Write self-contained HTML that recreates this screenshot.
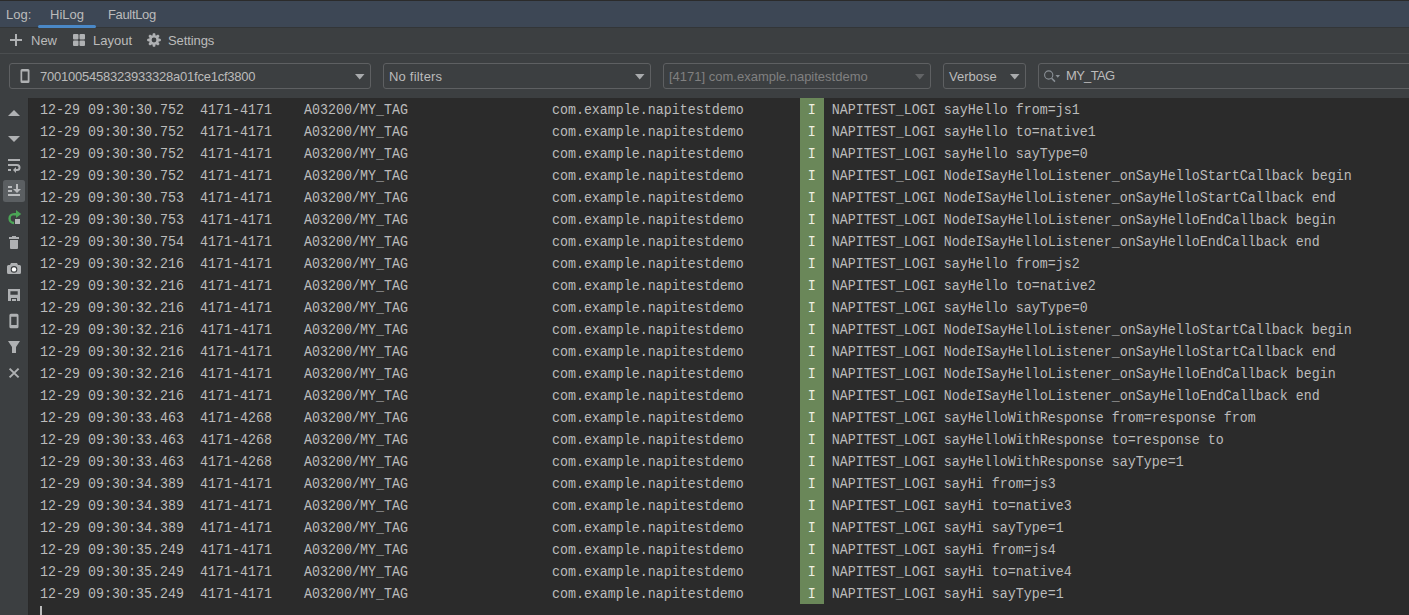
<!DOCTYPE html>
<html><head><meta charset="utf-8">
<style>
*{box-sizing:border-box;margin:0;padding:0}
html,body{width:1409px;height:615px;overflow:hidden;background:#3c3f41}
body{position:relative;font-family:"Liberation Sans",sans-serif;font-size:13px;color:#bbbbbb}
.abs{position:absolute}
#topline{left:0;top:0;width:1409px;height:1px;background:#2b2b2b}
#tabbar{left:0;top:1px;width:1409px;height:26px;background:#3d4755}
#tabbar .t{position:absolute;top:6px;line-height:16px;white-space:nowrap}
#uline{left:38px;top:25px;width:58px;height:3px;background:#4a88c7;border-radius:2px}
#tbline{left:0;top:27px;width:1409px;height:1px;background:#333638}
#toolbar{left:0;top:28px;width:1409px;height:25px;background:#3c3f41}
#toolbar .t{position:absolute;top:5px;line-height:16px;white-space:nowrap}
#sep{left:0;top:53px;width:1409px;height:1px;background:#4b4e50}
.combo{position:absolute;top:63px;height:26px;border:1px solid #5e6062;border-radius:3px;background:#3c3f41}
.combo .t{position:absolute;top:5px;line-height:16px;white-space:nowrap}
.arrow{position:absolute;top:10px;width:9.5px;height:5.5px;background:#a9abad;clip-path:polygon(0 0,100% 0,50% 100%)}
#log{left:28px;top:98px;width:1381px;border-left:1px solid #292929;height:517px;background:#2b2b2b}
#green{left:800px;top:98px;width:24px;height:506px;background:#6a8759}
#rows{left:0;top:0}
.r{position:absolute;left:40px;height:22px;font-family:"Liberation Mono",monospace;font-size:13.33px;line-height:19.642857px;transform:scaleY(1.12);transform-origin:0 0;white-space:pre;color:#bbbbbb;padding-top:1px}
.r b{font-weight:normal;color:#f0f0e0}
#side{left:0;top:98px;width:28px;height:517px;background:#3c3f41}
#caret{left:40px;top:606px;width:2px;height:9px;background:#bbbbbb}
</style></head><body>
<div id="topline" class="abs"></div>
<div id="tabbar" class="abs">
  <span class="t" style="left:6px">Log:</span>
  <span class="t" style="left:50px">HiLog</span>
  <span class="t" style="left:108px;letter-spacing:-0.35px">FaultLog</span>
</div>
<div id="tbline" class="abs"></div>
<div id="uline" class="abs"></div>
<div id="toolbar" class="abs">
  <svg class="abs" style="left:10px;top:6px" width="12" height="12" viewBox="0 0 12 12"><path d="M5 0h2v5h5v2H7v5H5V7H0V5h5z" fill="#afb1b3"/></svg>
  <span class="t" style="left:31px">New</span>
  <svg class="abs" style="left:73px;top:6px" width="12" height="12" viewBox="0 0 12 12"><rect x="0" y="0" width="5.5" height="5.5" rx="1" fill="#afb1b3"/><rect x="6.5" y="0" width="5.5" height="5.5" rx="1" fill="#afb1b3"/><rect x="0" y="6.5" width="5.5" height="5.5" rx="1" fill="#afb1b3"/><rect x="6.5" y="6.5" width="5.5" height="5.5" rx="1" fill="#afb1b3"/></svg>
  <span class="t" style="left:93px">Layout</span>
  <svg class="abs" style="left:147px;top:5px" width="14" height="14" viewBox="0 0 14 14"><path fill="#afb1b3" fill-rule="evenodd" d="M5.28 2.73 L5.92 0.18 L8.08 0.18 L8.72 2.73 L8.80 2.77 L11.06 1.42 L12.58 2.94 L11.23 5.20 L11.27 5.28 L13.82 5.92 L13.82 8.08 L11.27 8.72 L11.23 8.80 L12.58 11.06 L11.06 12.58 L8.80 11.23 L8.72 11.27 L8.08 13.82 L5.92 13.82 L5.28 11.27 L5.20 11.23 L2.94 12.58 L1.42 11.06 L2.77 8.80 L2.73 8.72 L0.18 8.08 L0.18 5.92 L2.73 5.28 L2.77 5.20 L1.42 2.94 L2.94 1.42 L5.20 2.77z M7 4.6A2.4 2.4 0 1 0 7 9.4A2.4 2.4 0 1 0 7 4.6z"/></svg>
  <span class="t" style="left:168px;letter-spacing:-0.1px">Settings</span>
</div>
<div id="sep" class="abs"></div>

<div class="combo" style="left:9px;width:362px">
  <svg class="abs" style="left:10px;top:4px" width="11" height="16" viewBox="0 0 11 16"><path fill-rule="evenodd" fill="#afb1b3" d="M2 1h6a1.5 1.5 0 0 1 1.5 1.5v11A1.5 1.5 0 0 1 8 15H2A1.5 1.5 0 0 1 .5 13.5v-11A1.5 1.5 0 0 1 2 1zM2.2 3.5v9h5.5v-9z"/></svg>
  <span class="t" style="left:30px;letter-spacing:-0.23px">7001005458323933328a01fce1cf3800</span>
  <div class="arrow" style="left:345px"></div>
</div>
<div class="combo" style="left:383px;width:268px">
  <span class="t" style="left:5px;letter-spacing:0.2px">No filters</span>
  <div class="arrow" style="left:251px"></div>
</div>
<div class="combo" style="left:663px;width:268px">
  <span class="t" style="left:5px;color:#808080">[4171] com.example.napitestdemo</span>
  <div class="arrow" style="left:251px;background:#626466"></div>
</div>
<div class="combo" style="left:943px;width:83px">
  <span class="t" style="left:5px">Verbose</span>
  <div class="arrow" style="left:66px"></div>
</div>
<div class="combo" style="left:1038px;width:400px">
  <svg class="abs" style="left:4px;top:5px" width="18" height="14" viewBox="0 0 18 14"><circle cx="5.7" cy="6" r="4.1" fill="none" stroke="#8a9096" stroke-width="1.1"/><path d="M8.6 9.2L12 12.6" stroke="#8a9096" stroke-width="1.5"/><path d="M12.5 6h4.5l-2.25 2.8z" fill="#8a9096"/></svg>
  <span class="t" style="left:27px;top:4px;letter-spacing:-0.7px">MY_TAG</span>
</div>

<div id="log" class="abs"></div>
<div id="green" class="abs"></div>
<div id="rows" class="abs"><div class="r" style="top:98px">12-29 09:30:30.752  4171-4171    A03200/MY_TAG                  com.example.napitestdemo        <b>I</b>  NAPITEST_LOGI sayHello from=js1</div>
<div class="r" style="top:120px">12-29 09:30:30.752  4171-4171    A03200/MY_TAG                  com.example.napitestdemo        <b>I</b>  NAPITEST_LOGI sayHello to=native1</div>
<div class="r" style="top:142px">12-29 09:30:30.752  4171-4171    A03200/MY_TAG                  com.example.napitestdemo        <b>I</b>  NAPITEST_LOGI sayHello sayType=0</div>
<div class="r" style="top:164px">12-29 09:30:30.752  4171-4171    A03200/MY_TAG                  com.example.napitestdemo        <b>I</b>  NAPITEST_LOGI NodeISayHelloListener_onSayHelloStartCallback begin</div>
<div class="r" style="top:186px">12-29 09:30:30.753  4171-4171    A03200/MY_TAG                  com.example.napitestdemo        <b>I</b>  NAPITEST_LOGI NodeISayHelloListener_onSayHelloStartCallback end</div>
<div class="r" style="top:208px">12-29 09:30:30.753  4171-4171    A03200/MY_TAG                  com.example.napitestdemo        <b>I</b>  NAPITEST_LOGI NodeISayHelloListener_onSayHelloEndCallback begin</div>
<div class="r" style="top:230px">12-29 09:30:30.754  4171-4171    A03200/MY_TAG                  com.example.napitestdemo        <b>I</b>  NAPITEST_LOGI NodeISayHelloListener_onSayHelloEndCallback end</div>
<div class="r" style="top:252px">12-29 09:30:32.216  4171-4171    A03200/MY_TAG                  com.example.napitestdemo        <b>I</b>  NAPITEST_LOGI sayHello from=js2</div>
<div class="r" style="top:274px">12-29 09:30:32.216  4171-4171    A03200/MY_TAG                  com.example.napitestdemo        <b>I</b>  NAPITEST_LOGI sayHello to=native2</div>
<div class="r" style="top:296px">12-29 09:30:32.216  4171-4171    A03200/MY_TAG                  com.example.napitestdemo        <b>I</b>  NAPITEST_LOGI sayHello sayType=0</div>
<div class="r" style="top:318px">12-29 09:30:32.216  4171-4171    A03200/MY_TAG                  com.example.napitestdemo        <b>I</b>  NAPITEST_LOGI NodeISayHelloListener_onSayHelloStartCallback begin</div>
<div class="r" style="top:340px">12-29 09:30:32.216  4171-4171    A03200/MY_TAG                  com.example.napitestdemo        <b>I</b>  NAPITEST_LOGI NodeISayHelloListener_onSayHelloStartCallback end</div>
<div class="r" style="top:362px">12-29 09:30:32.216  4171-4171    A03200/MY_TAG                  com.example.napitestdemo        <b>I</b>  NAPITEST_LOGI NodeISayHelloListener_onSayHelloEndCallback begin</div>
<div class="r" style="top:384px">12-29 09:30:32.216  4171-4171    A03200/MY_TAG                  com.example.napitestdemo        <b>I</b>  NAPITEST_LOGI NodeISayHelloListener_onSayHelloEndCallback end</div>
<div class="r" style="top:406px">12-29 09:30:33.463  4171-4268    A03200/MY_TAG                  com.example.napitestdemo        <b>I</b>  NAPITEST_LOGI sayHelloWithResponse from=response from</div>
<div class="r" style="top:428px">12-29 09:30:33.463  4171-4268    A03200/MY_TAG                  com.example.napitestdemo        <b>I</b>  NAPITEST_LOGI sayHelloWithResponse to=response to</div>
<div class="r" style="top:450px">12-29 09:30:33.463  4171-4268    A03200/MY_TAG                  com.example.napitestdemo        <b>I</b>  NAPITEST_LOGI sayHelloWithResponse sayType=1</div>
<div class="r" style="top:472px">12-29 09:30:34.389  4171-4171    A03200/MY_TAG                  com.example.napitestdemo        <b>I</b>  NAPITEST_LOGI sayHi from=js3</div>
<div class="r" style="top:494px">12-29 09:30:34.389  4171-4171    A03200/MY_TAG                  com.example.napitestdemo        <b>I</b>  NAPITEST_LOGI sayHi to=native3</div>
<div class="r" style="top:516px">12-29 09:30:34.389  4171-4171    A03200/MY_TAG                  com.example.napitestdemo        <b>I</b>  NAPITEST_LOGI sayHi sayType=1</div>
<div class="r" style="top:538px">12-29 09:30:35.249  4171-4171    A03200/MY_TAG                  com.example.napitestdemo        <b>I</b>  NAPITEST_LOGI sayHi from=js4</div>
<div class="r" style="top:560px">12-29 09:30:35.249  4171-4171    A03200/MY_TAG                  com.example.napitestdemo        <b>I</b>  NAPITEST_LOGI sayHi to=native4</div>
<div class="r" style="top:582px">12-29 09:30:35.249  4171-4171    A03200/MY_TAG                  com.example.napitestdemo        <b>I</b>  NAPITEST_LOGI sayHi sayType=1</div></div>
<div id="caret" class="abs"></div>

<div id="side" class="abs">
<svg class="abs" style="left:0;top:0" width="29" height="300" viewBox="0 98 29 300">
<g fill="#afb1b3">
<path d="M8 116H20L14 110z"/>
<path d="M8 136H20L14 142z"/>
<rect x="8" y="159" width="12" height="2"/>
<rect x="8" y="169" width="3" height="2"/>
<path d="M13 170L16 167V173z"/>
</g>
<path d="M8 165H17A2.5 2.5 0 0 1 17 170H15.5" fill="none" stroke="#afb1b3" stroke-width="2"/>
<rect x="3" y="180" width="22" height="22" rx="2.5" fill="#5b5f62"/>
<g fill="#b9bbbd">
<rect x="8" y="186" width="4" height="2"/>
<rect x="8" y="190" width="4" height="2"/>
<rect x="8" y="194" width="12" height="2"/>
<rect x="16" y="184" width="2" height="5.5"/>
<path d="M13 189H21L17 193z"/>
</g>
<path d="M14 214.1A4.45 4.45 0 0 0 14 223" fill="none" stroke="#4ba556" stroke-width="2.4"/>
<path d="M13.8 213.1H16V210L21.2 214L16 218V215.5H13.8z" fill="#4ba556"/>
<rect x="15" y="219" width="5" height="5" fill="#b4b6b8"/>
<g fill="#afb1b3">
<rect x="12" y="236" width="4" height="1.5"/>
<rect x="9" y="237" width="10" height="2"/>
<path d="M10 240H18V248A1 1 0 0 1 17 249H11A1 1 0 0 1 10 248z"/>
<path d="M7 266.5A1.5 1.5 0 0 1 8.5 265H10L11 263H17L18 265H19.5A1.5 1.5 0 0 1 21 266.5V272.6A1.5 1.5 0 0 1 19.5 274.1H8.5A1.5 1.5 0 0 1 7 272.6z"/>
</g>
<circle cx="14" cy="269.4" r="3.3" fill="#3c3f41"/>
<circle cx="14" cy="269.4" r="2.2" fill="#ffffff"/>
<path fill-rule="evenodd" fill="#afb1b3" d="M8 289H20V301H17V298H11V301H8zM10.4 291.2V294.7H17.7V291.2z"/>
<rect x="12" y="299" width="4" height="2" fill="#afb1b3"/>
<path fill-rule="evenodd" fill="#afb1b3" d="M10.9 313.8H17A1.5 1.5 0 0 1 18.5 315.3V326.7A1.5 1.5 0 0 1 17 328.2H10.9A1.5 1.5 0 0 1 9.4 326.7V315.3A1.5 1.5 0 0 1 10.9 313.8zM11.2 316.8V325H16.7V316.8z"/>
<path d="M8 341H20L16 347V353H12V347z" fill="#afb1b3"/>
<path d="M9.6 368.6L18.6 377.4M18.6 368.6L9.6 377.4" stroke="#afb1b3" stroke-width="2"/>
</svg>
</div>
</body></html>
